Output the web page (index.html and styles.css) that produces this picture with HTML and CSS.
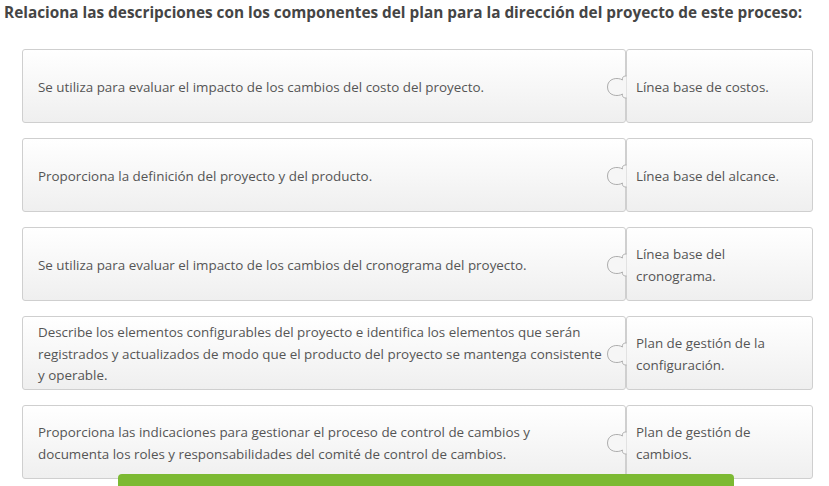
FILE: index.html
```html
<!DOCTYPE html>
<html lang="es">
<head>
<meta charset="utf-8">
<title>Relaciona</title>
<link rel="stylesheet" href="styles.css">
</head>
<body>
<div class="page">
  <h1 class="title">Relaciona las descripciones con los componentes del plan para la dirección del proyecto de este proceso:</h1>
  <div class="rows">
    <div class="row">
      <div class="desc">Se utiliza para evaluar el impacto de los cambios del costo del proyecto.
        <svg class="knob" viewBox="0 0 22 24" width="22" height="24"><path d="M21.5,1 C18,1 17,2.5 17.5,5 C13,2 2.5,3 2.5,12 C2.5,21 13,22 17.5,19 C17,21.5 18,23 21.5,23" /></svg>
      </div>
      <div class="term">Línea base de costos.</div>
    </div>
    <div class="row">
      <div class="desc">Proporciona la definición del proyecto y del producto.
        <svg class="knob" viewBox="0 0 22 24" width="22" height="24"><path d="M21.5,1 C18,1 17,2.5 17.5,5 C13,2 2.5,3 2.5,12 C2.5,21 13,22 17.5,19 C17,21.5 18,23 21.5,23" /></svg>
      </div>
      <div class="term">Línea base del alcance.</div>
    </div>
    <div class="row">
      <div class="desc">Se utiliza para evaluar el impacto de los cambios del cronograma del proyecto.
        <svg class="knob" viewBox="0 0 22 24" width="22" height="24"><path d="M21.5,1 C18,1 17,2.5 17.5,5 C13,2 2.5,3 2.5,12 C2.5,21 13,22 17.5,19 C17,21.5 18,23 21.5,23" /></svg>
      </div>
      <div class="term">Línea base del cronograma.</div>
    </div>
    <div class="row">
      <div class="desc">Describe los elementos configurables del proyecto e identifica los elementos que serán registrados y actualizados de modo que el producto del proyecto se mantenga consistente y operable.
        <svg class="knob" viewBox="0 0 22 24" width="22" height="24"><path d="M21.5,1 C18,1 17,2.5 17.5,5 C13,2 2.5,3 2.5,12 C2.5,21 13,22 17.5,19 C17,21.5 18,23 21.5,23" /></svg>
      </div>
      <div class="term">Plan de gestión de la configuración.</div>
    </div>
    <div class="row">
      <div class="desc">Proporciona las indicaciones para gestionar el proceso de control de cambios y documenta los roles y responsabilidades del comité de control de cambios.
        <svg class="knob" viewBox="0 0 22 24" width="22" height="24"><path d="M21.5,1 C18,1 17,2.5 17.5,5 C13,2 2.5,3 2.5,12 C2.5,21 13,22 17.5,19 C17,21.5 18,23 21.5,23" /></svg>
      </div>
      <div class="term">Plan de gestión de cambios.</div>
    </div>
  </div>
  <div class="submit"></div>
</div>
</body>
</html>
```

FILE: styles.css
```css
html, body {
  margin: 0;
  padding: 0;
  background: #fff;
  overflow: hidden;
}
.page {
  position: relative;
  width: 829px;
  height: 486px;
  font-family: "Open Sans", "Liberation Sans", sans-serif;
  color: #555;
}
.title {
  margin: 0;
  padding: 2px 0 0 4px;
  font-size: 15.35px;
  line-height: 21px;
  font-weight: 700;
  color: #454545;
  white-space: nowrap;
}
.rows {
  display: flex;
  flex-direction: column;
  gap: 15px;
  padding: 26px 0 0 22px;
  width: 791px;
}
.row {
  display: flex;
  height: 74px;
}
.desc, .term {
  box-sizing: border-box;
  height: 74px;
  display: flex;
  align-items: center;
  border: 1px solid #cfcfcf;
  border-radius: 3px;
  background: linear-gradient(#ffffff, #efefef);
  font-size: 13.4px;
  line-height: 21.5px;
  padding-top: 3px;
}
.desc {
  position: relative;
  width: 604px;
  padding-left: 15px;
  padding-right: 22px;
}
.term {
  width: 187px;
  padding-left: 9px;
  padding-right: 14px;
}
.knob {
  position: absolute;
  right: -2px;
  top: 50%;
  margin-top: -11px;
}
.knob path {
  fill: #f6f6f6;
  stroke: #adadad;
  stroke-width: 1;
}
.submit {
  position: absolute;
  left: 118px;
  top: 474px;
  width: 616px;
  height: 20px;
  background: #7cb932;
  border-radius: 4px 4px 0 0;
}
```
